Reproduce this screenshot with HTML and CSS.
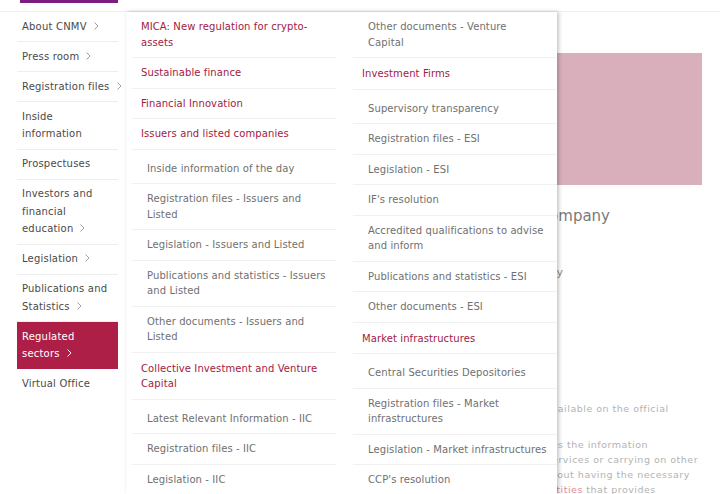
FILE: index.html
```html
<!DOCTYPE html>
<html lang="en">
<head>
  <meta charset="UTF-8">
  <title>CNMV - Regulated sectors</title>
  <link rel="stylesheet" href="styles.css">
</head>
<body>

  <!-- Cabecera -->
  <header class="top">
    <div class="brand-bar"></div>
  </header>

  <div class="layout">

    <!-- Menu lateral -->
    <nav class="side">
      <ul>
        <li><a href="#">About CNMV<svg class="chev" viewBox="0 0 5 8"><polyline points="0.5,0.5 4,4 0.5,7.5"/></svg></a></li>
        <li><a href="#">Press room<svg class="chev" viewBox="0 0 5 8"><polyline points="0.5,0.5 4,4 0.5,7.5"/></svg></a></li>
        <li><a href="#">Registration files<svg class="chev" viewBox="0 0 5 8"><polyline points="0.5,0.5 4,4 0.5,7.5"/></svg></a></li>
        <li><a href="#">Inside information</a></li>
        <li><a href="#">Prospectuses</a></li>
        <li><a href="#">Investors and financial education<svg class="chev" viewBox="0 0 5 8"><polyline points="0.5,0.5 4,4 0.5,7.5"/></svg></a></li>
        <li><a href="#">Legislation<svg class="chev" viewBox="0 0 5 8"><polyline points="0.5,0.5 4,4 0.5,7.5"/></svg></a></li>
        <li><a href="#">Publications and Statistics<svg class="chev" viewBox="0 0 5 8"><polyline points="0.5,0.5 4,4 0.5,7.5"/></svg></a></li>
        <li class="activo"><a href="#">Regulated sectors<svg class="chev" viewBox="0 0 5 8"><polyline points="0.5,0.5 4,4 0.5,7.5"/></svg></a></li>
        <li class="ultimo"><a href="#">Virtual Office</a></li>
      </ul>
    </nav>

    <!-- Contenido principal -->
    <main class="main">
      <div class="banner"></div>
      <h1 class="titulo">Authorisation and registration of an investment company</h1>
      <p class="dato">Securities and Exchange Commission supervisory</p>
      <div class="nota">
        <span class="ln">You can consult the current register of authorised investment firms, which is available on the official</span>
        <span class="ln espacio">In this area the CNMV alerts investors about unauthorised entities and publishes the information</span>
        <span class="ln">regarding the companies and individuals that might be providing investment services or carrying on other</span>
        <span class="ln">activities reserved to authorised entities in the Spanish securities markets without having the necessary</span>
        <span class="ln">authorisation to do so. See the lists of warnings and the list of <a href="#">unauthorised entities</a> that provides</span>
      </div>
    </main>

    <!-- Desplegable de sectores regulados -->
    <div class="desplegable">
      <div class="columna">
        <a class="titulo-sec" href="#">MICA: New regulation for crypto-assets</a>
        <a class="titulo-sec" href="#">Sustainable finance</a>
        <a class="titulo-sec" href="#">Financial Innovation</a>
        <a class="titulo-sec" href="#">Issuers and listed companies</a>
        <div class="grupo">
          <a href="#">Inside information of the day</a>
          <a href="#">Registration files - Issuers and Listed</a>
          <a href="#">Legislation - Issuers and Listed</a>
          <a href="#">Publications and statistics - Issuers and Listed</a>
          <a href="#">Other documents - Issuers and Listed</a>
        </div>
        <a class="titulo-sec" href="#">Collective Investment and Venture Capital</a>
        <div class="grupo">
          <a href="#">Latest Relevant Information - IIC</a>
          <a href="#">Registration files - IIC</a>
          <a href="#">Legislation - IIC</a>
        </div>
      </div>
      <div class="columna">
        <div class="grupo sigue">
          <a href="#">Other documents - Venture<br>Capital</a>
        </div>
        <a class="titulo-sec" href="#">Investment Firms</a>
        <div class="grupo">
          <a href="#">Supervisory transparency</a>
          <a href="#">Registration files - ESI</a>
          <a href="#">Legislation - ESI</a>
          <a href="#">IF's resolution</a>
          <a href="#">Accredited qualifications to advise and inform</a>
          <a href="#">Publications and statistics - ESI</a>
          <a href="#">Other documents - ESI</a>
        </div>
        <a class="titulo-sec" href="#">Market infrastructures</a>
        <div class="grupo">
          <a href="#">Central Securities Depositories</a>
          <a href="#">Registration files - Market infrastructures</a>
          <a href="#">Legislation - Market infrastructures</a>
          <a href="#">CCP's resolution</a>
        </div>
      </div>
    </div>

  </div>

</body>
</html>
```

FILE: styles.css
```css
* {
  box-sizing: border-box;
}

body {
  margin: 0;
  height: 494px;
  overflow: hidden;
  background: #fff;
  font-family: 'DejaVu Sans', sans-serif;
  font-size: 10px;
  color: #4a4a4a;
}

a {
  text-decoration: none;
}

/* Cabecera */
.top {
  height: 12px;
  border-bottom: 1px solid #efefef;
}

.brand-bar {
  margin-left: 20px;
  width: 98px;
  height: 3px;
  background: #7c1d80;
}

.layout {
  position: relative;
  display: flex;
}

/* Menu lateral */
.side {
  width: 118px;
  flex-shrink: 0;
  padding-left: 17px;
}

.side ul {
  list-style: none;
  margin: 0;
  padding: 0;
}

.side li {
  border-bottom: 1px solid #eee;
}

.side li.ultimo {
  border-bottom: none;
}

.side a {
  display: block;
  padding: 5.5px 7px 6px 5px;
  line-height: 17.5px;
  letter-spacing: 0.2px;
  color: #4a4a4a;
}

.side li.activo {
  border-bottom-color: transparent;
}

.side li.activo a {
  background: #ae1f47;
  color: #fff;
}

.chev {
  width: 5px;
  height: 8px;
  margin-left: 7px;
  margin-right: -11px;
  fill: none;
  stroke: #a0a0a0;
  stroke-width: 1;
}

.activo .chev {
  stroke: #fff;
}

/* Contenido principal */
.main {
  flex: 1;
  min-width: 0;
  padding: 41px 18px 0 22px;
  color: #8a8a8a;
}

.banner {
  height: 132px;
  background: #d9afbb;
}

.titulo {
  margin: 22px 92px 0 0;
  font-size: 15px;
  font-weight: normal;
  line-height: 18px;
  color: #7a7a7a;
  white-space: nowrap;
  text-align: right;
}

.dato {
  margin: 40px 139px 0 0;
  font-size: 11px;
  line-height: 16px;
  white-space: nowrap;
  text-align: right;
}

.nota {
  margin-top: 120px;
  font-size: 9.5px;
  letter-spacing: 0.5px;
  line-height: 15px;
  color: #b3b3b3;
}

.nota .ln {
  display: block;
  white-space: nowrap;
}

.nota .espacio {
  margin-top: 21px;
}

.nota a {
  color: #e08a9c;
}

/* Desplegable */
.desplegable {
  position: absolute;
  top: 0;
  left: 126px;
  width: 431px;
  height: 482px;
  display: flex;
  gap: 17px;
  padding-left: 6px;
  background: #fff;
  box-shadow: 2px 0 4px rgba(0, 0, 0, 0.22), 0 -1px 3px rgba(0, 0, 0, 0.04);
}

.columna {
  width: 204px;
  flex-shrink: 0;
}

.columna a {
  display: block;
  padding: 7px 8px 7px 15px;
  line-height: 15.5px;
  letter-spacing: 0.1px;
  border-bottom: 1px solid #f1f1f1;
  color: #707070;
}

.columna a.titulo-sec {
  padding-left: 9px;
  color: #a3193f;
}

.grupo {
  padding: 4px 0 1px;
}

.grupo.sigue {
  padding-top: 0;
}
```
